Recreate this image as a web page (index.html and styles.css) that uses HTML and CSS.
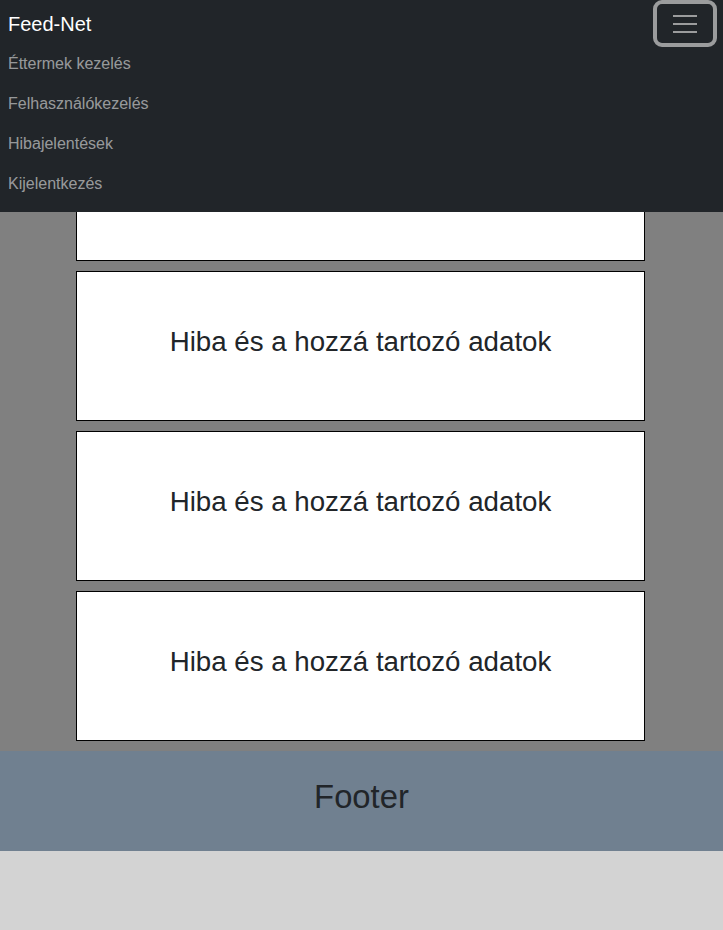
FILE: index.html
```html
<!DOCTYPE html>
<html lang="hu">

<head>
    <meta charset="UTF-8">
    <meta name="viewport" content="width=device-width, initial-scale=1.0">
    <title>Feed-Net: Hibajelentések</title>
    <link rel="stylesheet" href="styles.css">
</head>

<body>

    <nav class="navbar">
        <div class="navbar-head">
            <a class="navbar-brand" href="#">Feed-Net</a>
            <button class="navbar-toggler" type="button" aria-label="Menü">
                <span class="toggler-line"></span>
                <span class="toggler-line"></span>
                <span class="toggler-line"></span>
            </button>
        </div>
        <ul class="nav-list">
            <li><a class="nav-link" href="#">Éttermek kezelés</a></li>
            <li><a class="nav-link" href="#">Felhasználókezelés</a></li>
            <li><a class="nav-link" href="#">Hibajelentések</a></li>
            <li><a class="nav-link" href="#">Kijelentkezés</a></li>
        </ul>
    </nav>

    <main class="content">
        <div class="report-card">
            <h2>Hiba és a hozzá tartozó adatok</h2>
        </div>
        <div class="report-card">
            <h2>Hiba és a hozzá tartozó adatok</h2>
        </div>
        <div class="report-card">
            <h2>Hiba és a hozzá tartozó adatok</h2>
        </div>
        <div class="report-card">
            <h2>Hiba és a hozzá tartozó adatok</h2>
        </div>
    </main>

    <footer class="footer">
        <h1>Footer</h1>
    </footer>

</body>

</html>
```

FILE: styles.css
```css
:root {
    --dark: #212529;
    --link: rgba(255, 255, 255, 0.55);
}

* {
    margin: 0;
    padding: 0;
    box-sizing: border-box;
}

body {
    background-color: lightgray;
    font-family: "Liberation Sans", Arial, sans-serif;
    color: var(--dark);
}

.navbar {
    position: fixed;
    top: 0;
    left: 0;
    right: 0;
    z-index: 10;
    height: 212px;
    padding: 0 6px 0 8px;
    background-color: var(--dark);
}

.navbar-head {
    display: flex;
    justify-content: space-between;
    align-items: flex-start;
    height: 44px;
}

.navbar-brand {
    padding-top: 12px;
    font-size: 20px;
    line-height: 24px;
    color: #fff;
    text-decoration: none;
}

.navbar-toggler {
    display: flex;
    flex-direction: column;
    justify-content: center;
    align-items: center;
    gap: 6px;
    width: 64px;
    height: 47px;
    border: 4px solid #9b9c9d;
    border-radius: 9px;
    background: transparent;
}

.toggler-line {
    display: block;
    width: 24px;
    height: 2px;
    background-color: #9b9c9d;
}

.nav-list {
    list-style: none;
}

.nav-link {
    display: block;
    height: 40px;
    font-size: 16px;
    line-height: 40px;
    color: var(--link);
    text-decoration: none;
}

.content {
    display: flex;
    flex-direction: column;
    align-items: flex-start;
    gap: 10px;
    padding: 111px 0 10px 76px;
    background-color: gray;
}

.report-card {
    display: flex;
    justify-content: center;
    align-items: center;
    width: 569px;
    height: 150px;
    border: 1px solid #000;
    background-color: #fff;
}

.report-card h2 {
    margin-bottom: 8px;
    font-size: 27.7px;
    font-weight: 500;
    line-height: 1.2;
}

.footer {
    display: flex;
    justify-content: center;
    align-items: center;
    height: 100px;
    background-color: slategray;
}

.footer h1 {
    margin-bottom: 8px;
    font-size: 32.8px;
    font-weight: 500;
    line-height: 1.2;
}
```
